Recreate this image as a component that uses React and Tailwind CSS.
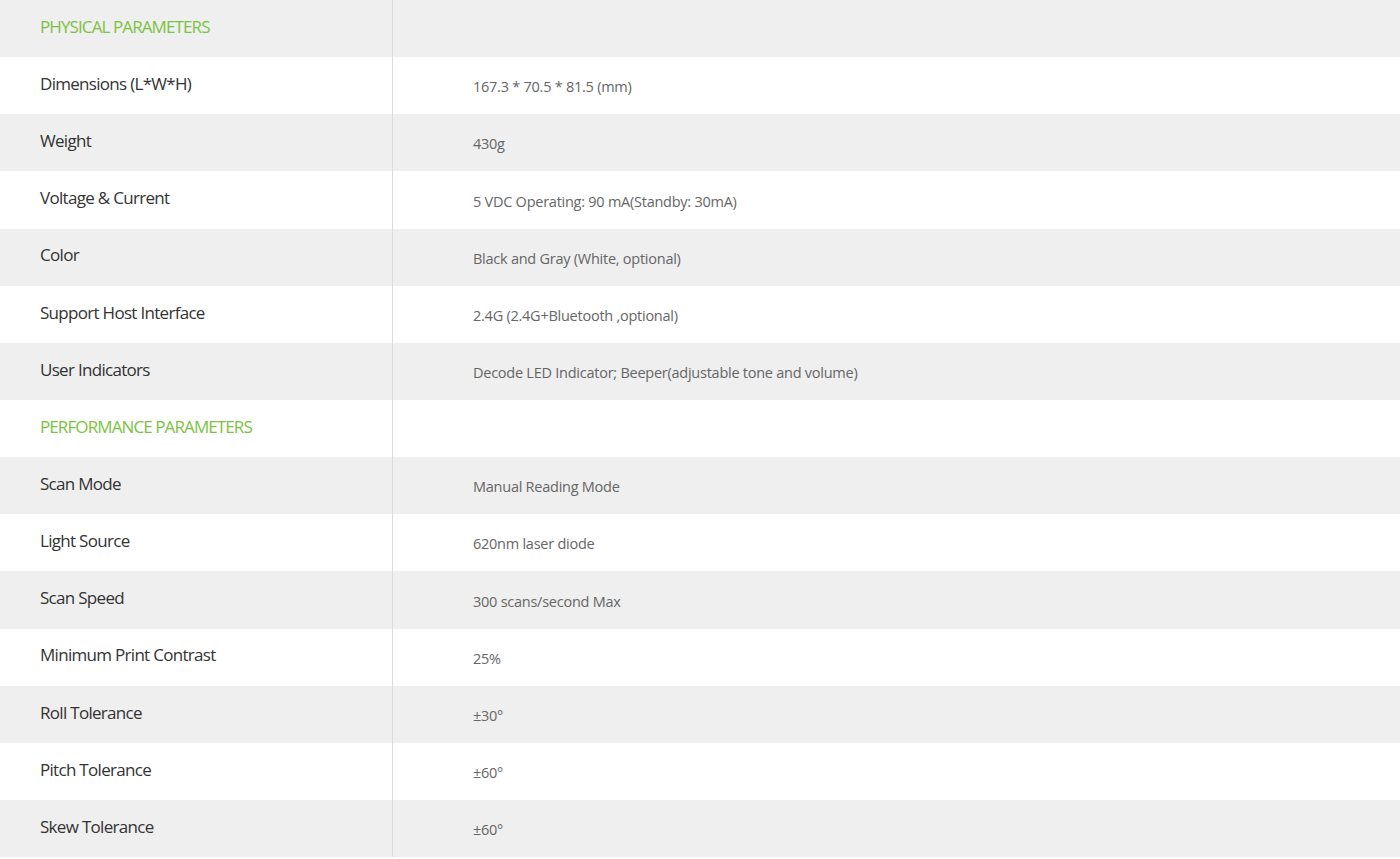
const rows = [
  { head: 'PHYSICAL PARAMETERS' },
  { label: 'Dimensions (L*W*H)', value: '167.3 * 70.5 * 81.5 (mm)' },
  { label: 'Weight', value: '430g' },
  { label: 'Voltage & Current', value: '5 VDC Operating: 90 mA(Standby: 30mA)' },
  { label: 'Color', value: 'Black and Gray (White, optional)' },
  { label: 'Support Host Interface', value: '2.4G (2.4G+Bluetooth ,optional)' },
  { label: 'User Indicators', value: 'Decode LED Indicator; Beeper(adjustable tone and volume)' },
  { head: 'PERFORMANCE PARAMETERS' },
  { label: 'Scan Mode', value: 'Manual Reading Mode' },
  { label: 'Light Source', value: '620nm laser diode' },
  { label: 'Scan Speed', value: '300 scans/second Max' },
  { label: 'Minimum Print Contrast', value: '25%' },
  { label: 'Roll Tolerance', value: '±30°' },
  { label: 'Pitch Tolerance', value: '±60°' },
  { label: 'Skew Tolerance', value: '±60°' },
]

export default function App() {
  return (
    <div className="w-[1400px] h-[859px] overflow-hidden bg-white font-['Open_Sans',sans-serif]">
      {rows.map((row, i) => (
        <div
          key={i}
          className={`flex h-[57.15px] ${i % 2 === 0 ? 'bg-[#efefef]' : 'bg-white'}`}
        >
          {/* label column */}
          <div className="w-[393px] shrink-0 flex items-center pl-10 pb-[4px] border-r border-[#dcdcdc]">
            {row.head ? (
              <span className="text-[17px] tracking-[-0.9px] text-[#7cc242]">{row.head}</span>
            ) : (
              <span className="text-[17px] tracking-[-0.7px] text-[#333]">{row.label}</span>
            )}
          </div>
          {/* value column */}
          <div className="flex-1 flex items-center pl-[80px] pt-[3px]">
            {row.value && (
              <span className="text-[14.5px] tracking-[-0.25px] text-[#666]">{row.value}</span>
            )}
          </div>
        </div>
      ))}
    </div>
  )
}
